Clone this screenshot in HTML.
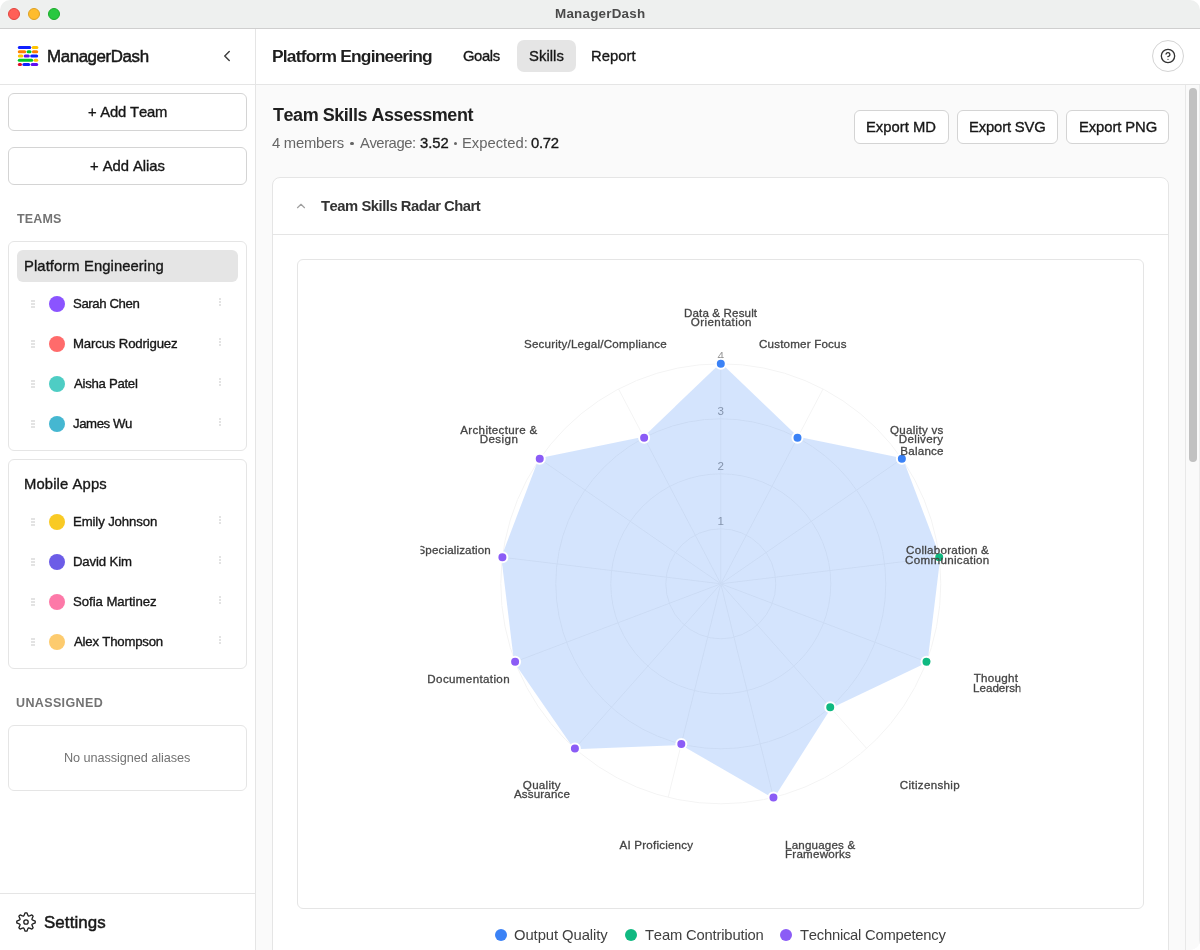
<!DOCTYPE html>
<html lang="en"><head><meta charset="utf-8"><title>ManagerDash</title>
<style>
*{box-sizing:border-box;margin:0;padding:0}
html,body{width:1200px;height:950px;overflow:hidden;background:#fff}
body{font-family:"Liberation Sans",sans-serif;color:#171717;position:relative}
.abs{position:absolute}
.t{position:absolute;white-space:nowrap;line-height:1;will-change:transform;font-kerning:none}
#win{position:absolute;left:0;top:0;width:1200px;height:950px;border-radius:10px;overflow:hidden;background:#fff}
#titlebar{position:absolute;left:0;top:0;width:1200px;height:29px;background:#eef0ef;border-bottom:1px solid #cfcfcf}
.tl{position:absolute;top:8px;width:12px;height:12px;border-radius:50%}
#sidebar{position:absolute;left:0;top:29px;width:256px;height:921px;background:#fff;border-right:1px solid #e5e5e5}
#header{position:absolute;left:256px;top:29px;width:944px;height:56px;background:#fff;border-bottom:1px solid #e5e5e5}
.btn{position:absolute;background:#fff;border:1px solid #d4d4d4;border-radius:6px}
.card{position:absolute;background:#fff;border:1px solid #e5e5e5;border-radius:6px}
.dot{position:absolute;width:16px;height:16px;border-radius:50%;left:49px}
.grip{position:absolute;left:31px;width:4px;height:7px}
.grip i{position:absolute;left:0;width:4px;height:1.6px;background:#e3e3e3}
.keb{position:absolute;left:219px;width:2px;height:8px}
.keb i{position:absolute;left:0;width:2px;height:2px;border-radius:50%;background:#dadada}
svg text.lab{font-kerning:none;font-family:"Liberation Sans",sans-serif;font-size:11.6px;fill:#444;stroke:#444;stroke-width:.3px}
svg text.tick{font-family:"Liberation Sans",sans-serif;font-size:11.6px;fill:#999}
</style></head><body>
<div id="win">
<div id="titlebar">
  <div class="tl" style="left:8px;background:#ff5f57;border:1px solid #e2453f"></div>
  <div class="tl" style="left:28px;background:#febc2e;border:1px solid #dea123"></div>
  <div class="tl" style="left:48px;background:#28c840;border:1px solid #1aab29"></div>
</div>
<div id="sidebar"></div>
<div class="abs" style="left:256px;top:85px;width:944px;height:865px;background:#fafafa"></div>
<div id="header"></div>
<!-- sidebar header -->
<div class="abs" style="left:0;top:84px;width:255px;height:1px;background:#e5e5e5"></div>
<svg class="abs" style="left:16px;top:44px" width="24" height="24" viewBox="0 0 24 24">
  <g stroke-width="3" stroke-linecap="round" fill="none">
    <path d="M3.3 3.45H13.8" stroke="#1020ff"/><path d="M17.2 3.45H20.9" stroke="#ffc400"/>
    <path d="M3.3 7.7H8.7" stroke="#ff7f00"/><path d="M12.1 7.7H14" stroke="#00c828"/><path d="M17.4 7.7H20.7" stroke="#ff7f00"/>
    <path d="M3.3 11.95H5.8" stroke="#ffc400"/><path d="M9.2 11.95H12.3" stroke="#6010f0"/><path d="M15.7 11.95H20.7" stroke="#1020ff"/>
    <path d="M3.3 16.25H15.7" stroke="#00c828"/><path d="M19.1 16.25H20.7" stroke="#ffc400"/>
    <path d="M3.3 20.55H4.5" stroke="#e0102a"/><path d="M7.9 20.55H12.7" stroke="#1020ff"/><path d="M16.1 20.55H20.7" stroke="#6010f0"/>
  </g>
</svg>
<svg class="abs" style="left:218px;top:47px" width="18" height="18" viewBox="0 0 24 24" fill="none" stroke="#404040" stroke-width="2" stroke-linecap="round" stroke-linejoin="round"><path d="m15 18-6-6 6-6"/></svg>

<div class="btn" style="left:8px;top:93px;width:239px;height:38px"></div>
<div class="btn" style="left:8px;top:147px;width:239px;height:38px"></div>

<div class="card" style="left:8px;top:241px;width:239px;height:210px"></div>
<div class="abs" style="left:17px;top:250px;width:221px;height:32px;border-radius:6px;background:#e5e5e5"></div>
<div class="grip" style="top:300.2px"><i style="top:0"></i><i style="top:3px"></i><i style="top:6px"></i></div>
<div class="keb" style="top:298px"><i style="top:0"></i><i style="top:3px"></i><i style="top:6px"></i></div>
<div class="grip" style="top:340.2px"><i style="top:0"></i><i style="top:3px"></i><i style="top:6px"></i></div>
<div class="keb" style="top:338px"><i style="top:0"></i><i style="top:3px"></i><i style="top:6px"></i></div>
<div class="grip" style="top:380.2px"><i style="top:0"></i><i style="top:3px"></i><i style="top:6px"></i></div>
<div class="keb" style="top:378px"><i style="top:0"></i><i style="top:3px"></i><i style="top:6px"></i></div>
<div class="grip" style="top:420.2px"><i style="top:0"></i><i style="top:3px"></i><i style="top:6px"></i></div>
<div class="keb" style="top:418px"><i style="top:0"></i><i style="top:3px"></i><i style="top:6px"></i></div><div class="dot" style="top:296px;background:#8b54ff"></div>
<div class="dot" style="top:336px;background:#ff6b6b"></div>
<div class="dot" style="top:376px;background:#4ecdc4"></div>
<div class="dot" style="top:416px;background:#45b7d1"></div>
<div class="card" style="left:8px;top:459px;width:239px;height:210px"></div>
<div class="grip" style="top:518.2px"><i style="top:0"></i><i style="top:3px"></i><i style="top:6px"></i></div>
<div class="keb" style="top:516px"><i style="top:0"></i><i style="top:3px"></i><i style="top:6px"></i></div>
<div class="grip" style="top:558.2px"><i style="top:0"></i><i style="top:3px"></i><i style="top:6px"></i></div>
<div class="keb" style="top:556px"><i style="top:0"></i><i style="top:3px"></i><i style="top:6px"></i></div>
<div class="grip" style="top:598.2px"><i style="top:0"></i><i style="top:3px"></i><i style="top:6px"></i></div>
<div class="keb" style="top:596px"><i style="top:0"></i><i style="top:3px"></i><i style="top:6px"></i></div>
<div class="grip" style="top:638.2px"><i style="top:0"></i><i style="top:3px"></i><i style="top:6px"></i></div>
<div class="keb" style="top:636px"><i style="top:0"></i><i style="top:3px"></i><i style="top:6px"></i></div><div class="dot" style="top:514px;background:#f9ca24"></div>
<div class="dot" style="top:554px;background:#6c5ce7"></div>
<div class="dot" style="top:594px;background:#fd79a8"></div>
<div class="dot" style="top:634px;background:#fdcb6e"></div>
<div class="card" style="left:8px;top:725px;width:239px;height:66px"></div>

<div class="abs" style="left:0;top:893px;width:255px;height:1px;background:#e5e5e5"></div>
<svg class="abs" style="left:16px;top:912px" width="20" height="20" viewBox="0 0 20 20" fill="none" stroke="#1f1f1f" stroke-width="1.3" stroke-linejoin="round"><path d="M9.11 0.79 L10.89 0.79 L11.78 3.13 L12.45 4.09 L13.60 3.88 L15.88 2.86 L17.14 4.12 L16.12 6.40 L15.91 7.55 L16.87 8.22 L19.21 9.11 L19.21 10.89 L16.87 11.78 L15.91 12.45 L16.12 13.60 L17.14 15.88 L15.88 17.14 L13.60 16.12 L12.45 15.91 L11.78 16.87 L10.89 19.21 L9.11 19.21 L8.22 16.87 L7.55 15.91 L6.40 16.12 L4.12 17.14 L2.86 15.88 L3.88 13.60 L4.09 12.45 L3.13 11.78 L0.79 10.89 L0.79 9.11 L3.13 8.22 L4.09 7.55 L3.88 6.40 L2.86 4.12 L4.12 2.86 L6.40 3.88 L7.55 4.09 L8.22 3.13Z"/><circle cx="10" cy="10" r="2.2"/></svg>

<!-- header -->
<div class="abs" style="left:517px;top:40px;width:59px;height:32px;border-radius:7px;background:#e5e5e5"></div>
<div class="abs" style="left:1152px;top:40px;width:32px;height:32px;border-radius:50%;border:1px solid #d4d4d4;background:#fff"></div>
<svg class="abs" style="left:1160px;top:48px" width="16" height="16" viewBox="0 0 24 24" fill="none" stroke="#333" stroke-width="2" stroke-linecap="round" stroke-linejoin="round"><circle cx="12" cy="12" r="10"/><path d="M9.09 9a3 3 0 0 1 5.83 1c0 2-3 3-3 3"/><path d="M12 17h.01"/></svg>

<!-- main -->
<div class="abs" style="left:350.4px;top:142.2px;width:3.2px;height:3.2px;border-radius:50%;background:#666"></div>
<div class="abs" style="left:453.6px;top:142.2px;width:3.2px;height:3.2px;border-radius:50%;background:#666"></div>
<div class="btn" style="left:854px;top:110px;width:95px;height:34px"></div>
<div class="btn" style="left:957px;top:110px;width:101px;height:34px"></div>
<div class="btn" style="left:1066px;top:110px;width:103px;height:34px"></div>

<div class="card" style="left:272px;top:177px;width:897px;height:800px;border-radius:8px"></div>
<div class="abs" style="left:273px;top:234px;width:895px;height:1px;background:#e5e5e5"></div>
<svg class="abs" style="left:294px;top:199px" width="14" height="14" viewBox="0 0 24 24" fill="none" stroke="#a0a0a0" stroke-width="2" stroke-linecap="round" stroke-linejoin="round"><path d="m18 15-6-6-6 6"/></svg>
<div class="card" style="left:297px;top:259px;width:847px;height:650px;border-radius:6px"></div>
<svg id="radar" width="601" height="600" viewBox="0 0 601 600" style="position:absolute;left:420.0px;top:284.0px;overflow:hidden;will-change:transform">
<defs><clipPath id="rc"><rect x="0.5" y="0" width="600" height="600"/></clipPath></defs><g clip-path="url(#rc)">
<circle cx="300.8" cy="299.8" r="55.00" fill="none" stroke="#f4f4f4" stroke-width="1"/>
<circle cx="300.8" cy="299.8" r="110.00" fill="none" stroke="#f4f4f4" stroke-width="1"/>
<circle cx="300.8" cy="299.8" r="165.00" fill="none" stroke="#f4f4f4" stroke-width="1"/>
<circle cx="300.8" cy="299.8" r="220.00" fill="none" stroke="#f4f4f4" stroke-width="1"/>
<line x1="300.8" y1="299.8" x2="300.80" y2="79.80" stroke="#f4f4f4" stroke-width="1"/>
<line x1="300.8" y1="299.8" x2="403.04" y2="105.00" stroke="#f4f4f4" stroke-width="1"/>
<line x1="300.8" y1="299.8" x2="481.86" y2="174.83" stroke="#f4f4f4" stroke-width="1"/>
<line x1="300.8" y1="299.8" x2="519.20" y2="273.28" stroke="#f4f4f4" stroke-width="1"/>
<line x1="300.8" y1="299.8" x2="506.50" y2="377.81" stroke="#f4f4f4" stroke-width="1"/>
<line x1="300.8" y1="299.8" x2="446.69" y2="464.47" stroke="#f4f4f4" stroke-width="1"/>
<line x1="300.8" y1="299.8" x2="353.45" y2="513.41" stroke="#f4f4f4" stroke-width="1"/>
<line x1="300.8" y1="299.8" x2="248.15" y2="513.41" stroke="#f4f4f4" stroke-width="1"/>
<line x1="300.8" y1="299.8" x2="154.91" y2="464.47" stroke="#f4f4f4" stroke-width="1"/>
<line x1="300.8" y1="299.8" x2="95.10" y2="377.81" stroke="#f4f4f4" stroke-width="1"/>
<line x1="300.8" y1="299.8" x2="82.40" y2="273.28" stroke="#f4f4f4" stroke-width="1"/>
<line x1="300.8" y1="299.8" x2="119.74" y2="174.83" stroke="#f4f4f4" stroke-width="1"/>
<line x1="300.8" y1="299.8" x2="198.56" y2="105.00" stroke="#f4f4f4" stroke-width="1"/>
<text x="300.8" y="241.20" text-anchor="middle" class="tick">1</text>
<text x="300.8" y="186.20" text-anchor="middle" class="tick">2</text>
<text x="300.8" y="131.20" text-anchor="middle" class="tick">3</text>
<text x="300.8" y="76.20" text-anchor="middle" class="tick">4</text>
<polygon points="300.80,78.70 377.99,152.73 482.76,174.20 520.29,273.15 507.53,378.20 410.94,424.13 353.71,514.48 261.05,461.07 154.18,465.30 94.07,378.20 81.31,273.15 118.84,174.20 223.61,152.73" fill="rgba(59,130,246,0.22)"/>
<circle cx="300.80" cy="79.80" r="5" fill="#3b82f6" stroke="#ffffff" stroke-width="2"/>
<circle cx="377.48" cy="153.70" r="5" fill="#3b82f6" stroke="#ffffff" stroke-width="2"/>
<circle cx="481.86" cy="174.83" r="5" fill="#3b82f6" stroke="#ffffff" stroke-width="2"/>
<circle cx="519.20" cy="273.28" r="5" fill="#10b981" stroke="#ffffff" stroke-width="2"/>
<circle cx="506.50" cy="377.81" r="5" fill="#10b981" stroke="#ffffff" stroke-width="2"/>
<circle cx="410.22" cy="423.30" r="5" fill="#10b981" stroke="#ffffff" stroke-width="2"/>
<circle cx="353.45" cy="513.41" r="5" fill="#8b5cf6" stroke="#ffffff" stroke-width="2"/>
<circle cx="261.31" cy="460.01" r="5" fill="#8b5cf6" stroke="#ffffff" stroke-width="2"/>
<circle cx="154.91" cy="464.47" r="5" fill="#8b5cf6" stroke="#ffffff" stroke-width="2"/>
<circle cx="95.10" cy="377.81" r="5" fill="#8b5cf6" stroke="#ffffff" stroke-width="2"/>
<circle cx="82.40" cy="273.28" r="5" fill="#8b5cf6" stroke="#ffffff" stroke-width="2"/>
<circle cx="119.74" cy="174.83" r="5" fill="#8b5cf6" stroke="#ffffff" stroke-width="2"/>
<circle cx="224.12" cy="153.70" r="5" fill="#8b5cf6" stroke="#ffffff" stroke-width="2"/>
<text x="264.05" y="33.00" class="lab" style="font-size:11.6px;letter-spacing:0.123px">Data &amp; Result</text>
<text x="270.75" y="42.00" class="lab" style="font-size:11.6px;letter-spacing:0.406px">Orientation</text>
<text x="338.91" y="64.00" class="lab" style="font-size:11.6px;letter-spacing:0.201px">Customer Focus</text>
<text x="469.95" y="149.80" class="lab" style="font-size:11.6px;letter-spacing:0.283px">Quality vs</text>
<text x="478.75" y="158.80" class="lab" style="font-size:11.6px;letter-spacing:0.34px">Delivery</text>
<text x="480.35" y="170.70" class="lab" style="font-size:11.6px;letter-spacing:0.208px">Balance</text>
<text x="486.11" y="269.80" class="lab" style="font-size:11.6px;letter-spacing:0.247px">Collaboration &amp;</text>
<text x="485.11" y="279.50" class="lab" style="font-size:11.6px;letter-spacing:0.296px">Communication</text>
<text x="553.74" y="398.40" class="lab" style="font-size:11.6px;letter-spacing:0.297px">Thought</text>
<text x="553.05" y="407.70" class="lab" style="font-size:11.6px;letter-spacing:0px">Leadership</text>
<text x="479.81" y="505.00" class="lab" style="font-size:11.6px;letter-spacing:0.314px">Citizenship</text>
<text x="365.05" y="564.60" class="lab" style="font-size:11.6px;letter-spacing:0.176px">Languages &amp;</text>
<text x="365.05" y="573.60" class="lab" style="font-size:11.6px;letter-spacing:0.218px">Frameworks</text>
<text x="199.58" y="565.00" class="lab" style="font-size:11.6px;letter-spacing:0.195px">AI Proficiency</text>
<text x="102.85" y="504.60" class="lab" style="font-size:11.6px;letter-spacing:0.278px">Quality</text>
<text x="93.98" y="513.60" class="lab" style="font-size:11.6px;letter-spacing:0.142px">Assurance</text>
<text x="7.35" y="398.70" class="lab" style="font-size:11.6px;letter-spacing:0.357px">Documentation</text>
<text x="-2.53" y="270.00" class="lab" style="font-size:11.6px;letter-spacing:0.131px">Specialization</text>
<text x="40.28" y="149.70" class="lab" style="font-size:11.6px;letter-spacing:0.319px">Architecture &amp;</text>
<text x="59.75" y="158.70" class="lab" style="font-size:11.6px;letter-spacing:0.399px">Design</text>
<text x="103.97" y="64.00" class="lab" style="font-size:11.6px;letter-spacing:0.202px">Security/Legal/Compliance</text>
</g></svg>
<div class="abs" style="left:495px;top:929px;width:12px;height:12px;border-radius:50%;background:#3b82f6"></div>
<div class="abs" style="left:625px;top:929px;width:12px;height:12px;border-radius:50%;background:#10b981"></div>
<div class="abs" style="left:780px;top:929px;width:12px;height:12px;border-radius:50%;background:#8b5cf6"></div>

<!-- scrollbar -->
<div class="abs" style="left:1185px;top:85px;width:15px;height:865px;background:#fafafa;border-left:1px solid #e8e8e8;border-right:1px solid #ececec"></div>
<div class="abs" style="left:1189px;top:88px;width:8px;height:374px;border-radius:4px;background:#c1c1c1"></div>

<div class="t" id="wtitle" style="left:554.6px;top:7.00px;font-size:13.4px;letter-spacing:0.236px;color:#4a4a4a;font-weight:700">ManagerDash</div>
<div class="t" id="brand" style="left:47.31px;top:49.01px;font-size:16.9px;letter-spacing:-0.407px;color:#171717;-webkit-text-stroke:.5px #171717">ManagerDash</div>
<div class="t" id="addteam" style="left:88.08px;top:105.00px;font-size:14.8px;letter-spacing:-0.193px;color:#171717;-webkit-text-stroke:.35px #171717">+ Add Team</div>
<div class="t" id="addalias" style="left:89.88px;top:159.02px;font-size:14.8px;letter-spacing:-0.042px;color:#171717;-webkit-text-stroke:.35px #171717">+ Add Alias</div>
<div class="t" id="teams" style="left:16.76px;top:213.01px;font-size:12.5px;letter-spacing:0.17px;color:#737373;font-weight:700">TEAMS</div>
<div class="t" id="pe" style="left:24.39px;top:259.00px;font-size:14.8px;letter-spacing:0.082px;color:#171717;-webkit-text-stroke:.35px #171717">Platform Engineering</div>
<div class="t" id="n10" style="left:73.0px;top:297.00px;font-size:13.2px;letter-spacing:-0.399px;color:#171717;-webkit-text-stroke:.35px #171717">Sarah Chen</div>
<div class="t" id="n11" style="left:72.52px;top:337.00px;font-size:13.2px;letter-spacing:-0.158px;color:#171717;-webkit-text-stroke:.35px #171717">Marcus Rodriguez</div>
<div class="t" id="n12" style="left:73.57px;top:377.00px;font-size:13.2px;letter-spacing:-0.286px;color:#171717;-webkit-text-stroke:.35px #171717">Aisha Patel</div>
<div class="t" id="n13" style="left:73.39px;top:417.00px;font-size:13.2px;letter-spacing:-0.409px;color:#171717;-webkit-text-stroke:.35px #171717">James Wu</div>
<div class="t" id="ma" style="left:24.39px;top:477.00px;font-size:14.8px;letter-spacing:0.131px;color:#171717;-webkit-text-stroke:.35px #171717">Mobile Apps</div>
<div class="t" id="n20" style="left:72.52px;top:515.00px;font-size:13.2px;letter-spacing:-0.125px;color:#171717;-webkit-text-stroke:.35px #171717">Emily Johnson</div>
<div class="t" id="n21" style="left:72.52px;top:555.00px;font-size:13.2px;letter-spacing:-0.149px;color:#171717;-webkit-text-stroke:.35px #171717">David Kim</div>
<div class="t" id="n22" style="left:73.0px;top:595.00px;font-size:13.2px;letter-spacing:-0.055px;color:#171717;-webkit-text-stroke:.35px #171717">Sofia Martinez</div>
<div class="t" id="n23" style="left:73.57px;top:635.00px;font-size:13.2px;letter-spacing:-0.202px;color:#171717;-webkit-text-stroke:.35px #171717">Alex Thompson</div>
<div class="t" id="unas" style="left:15.85px;top:697.01px;font-size:12.5px;letter-spacing:0.37px;color:#737373;font-weight:700">UNASSIGNED</div>
<div class="t" id="noun" style="left:63.96px;top:752.01px;font-size:12.7px;letter-spacing:-0.064px;color:#737373">No unassigned aliases</div>
<div class="t" id="settings" style="left:43.83px;top:915.01px;font-size:16.9px;letter-spacing:0.102px;color:#171717;-webkit-text-stroke:.5px #171717">Settings</div>
<div class="t" id="hpe" style="left:271.54px;top:48.01px;font-size:17.4px;letter-spacing:-0.796px;color:#1f1f1f;font-weight:700">Platform Engineering</div>
<div class="t" id="goals" style="left:463.46px;top:49.00px;font-size:14.8px;letter-spacing:-0.396px;color:#171717;-webkit-text-stroke:.35px #171717">Goals</div>
<div class="t" id="skills" style="left:529.03px;top:49.00px;font-size:14.8px;letter-spacing:0.054px;color:#171717;-webkit-text-stroke:.35px #171717">Skills</div>
<div class="t" id="report" style="left:591.29px;top:49.00px;font-size:14.8px;letter-spacing:0.04px;color:#171717;-webkit-text-stroke:.35px #171717">Report</div>
<div class="t" id="tsa" style="left:273.1px;top:106.02px;font-size:18px;letter-spacing:-0.461px;color:#1f1f1f;font-weight:700">Team Skills Assessment</div>
<div class="t" id="m1" style="left:272.46px;top:136.00px;font-size:14.8px;letter-spacing:-0.243px;color:#666">4 members</div>
<div class="t" id="m2" style="left:359.97px;top:136.00px;font-size:14.8px;letter-spacing:-0.451px;color:#666">Average:</div>
<div class="t" id="m3" style="left:419.94px;top:136.00px;font-size:14.8px;letter-spacing:0.001px;color:#171717;-webkit-text-stroke:.35px #171717">3.52</div>
<div class="t" id="m4" style="left:462.29px;top:136.00px;font-size:14.8px;letter-spacing:-0.007px;color:#666">Expected:</div>
<div class="t" id="m5" style="left:531.42px;top:136.00px;font-size:14.8px;letter-spacing:-0.261px;color:#171717;-webkit-text-stroke:.35px #171717">0.72</div>
<div class="t" id="emd" style="left:865.99px;top:120.00px;font-size:14.8px;letter-spacing:0.002px;color:#171717;-webkit-text-stroke:.35px #171717">Export MD</div>
<div class="t" id="esvg" style="left:969.49px;top:120.00px;font-size:14.8px;letter-spacing:-0.147px;color:#171717;-webkit-text-stroke:.35px #171717">Export SVG</div>
<div class="t" id="epng" style="left:1078.59px;top:120.00px;font-size:14.8px;letter-spacing:-0.082px;color:#171717;-webkit-text-stroke:.35px #171717">Export PNG</div>
<div class="t" id="radtitle" style="left:321.43px;top:199.00px;font-size:14.8px;letter-spacing:-0.474px;color:#333;font-weight:700">Team Skills Radar Chart</div>
<div class="t" id="lg1" style="left:514.3px;top:928.00px;font-size:14.8px;letter-spacing:-0.067px;color:#404040">Output Quality</div>
<div class="t" id="lg2" style="left:645.17px;top:928.00px;font-size:14.8px;letter-spacing:-0.185px;color:#404040">Team Contribution</div>
<div class="t" id="lg3" style="left:799.67px;top:928.00px;font-size:14.8px;letter-spacing:-0.246px;color:#404040">Technical Competency</div>
</div>
</body></html>
